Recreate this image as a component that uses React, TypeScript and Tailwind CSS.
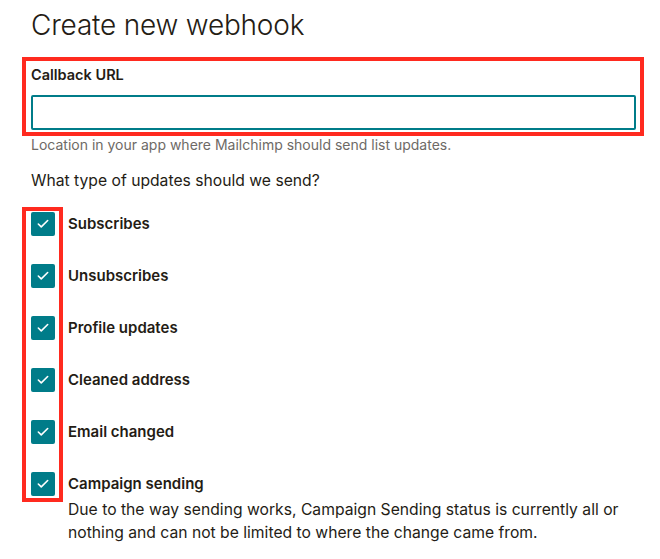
import { Check } from 'lucide-react';

const options = [
  'Subscribes',
  'Unsubscribes',
  'Profile updates',
  'Cleaned address',
  'Email changed',
  'Campaign sending',
];

function Checkbox() {
  return (
    <span className="flex h-6 w-6 shrink-0 items-center justify-center rounded-[2px] bg-[#007c89]">
      <Check className="h-[14px] w-[14px] text-white" strokeWidth={2.75} />
    </span>
  );
}

export default function App() {
  return (
    <div className="min-h-screen bg-white pl-[31px] pr-[24px] text-[#241c15] [font-family:Inter,'Liberation_Sans',sans-serif]">
      <h1 className="pt-[7px] text-[28px] font-light leading-[36px] tracking-[-0.2px]">
        Create new webhook
      </h1>

      {/* callback url */}
      <div className="-ml-[9px] mt-[14px] w-[622px] border-4 border-[#ff2a1f] pb-[2px] pl-[5px] pr-[4px] pt-[4px]">
        <label className="block text-[14.5px] font-semibold leading-[20px]">Callback URL</label>
        <input
          type="text"
          className="mt-[10px] block h-[35px] w-full rounded-[2px] border-2 border-[#007c89] px-2 text-sm outline-none"
        />
      </div>
      <p className="mt-[0px] text-[14px] leading-[18px] text-[#6e6a66]">
        Location in your app where Mailchimp should send list updates.
      </p>

      <p className="mt-[16px] text-[15.7px] leading-[22px]">What type of updates should we send?</p>

      {/* options */}
      <div className="relative mt-[20px]">
        <ul className="flex flex-col gap-[28px]">
          {options.map((o) => (
            <li key={o} className="flex items-start gap-[13px]">
              <Checkbox />
              <div>
                <div className="text-[15px] font-semibold leading-6">{o}</div>
                {o === 'Campaign sending' && (
                  <p className="mt-[2px] max-w-[570px] text-[15.7px] leading-[23px]">
                    Due to the way sending works, Campaign Sending status is currently all or nothing
                    and can not be limited to where the change came from.
                  </p>
                )}
              </div>
            </li>
          ))}
        </ul>
        <div className="pointer-events-none absolute -left-[9px] -top-[5px] h-[295px] w-[41px] border-4 border-[#ff2a1f]" />
      </div>
    </div>
  );
}
